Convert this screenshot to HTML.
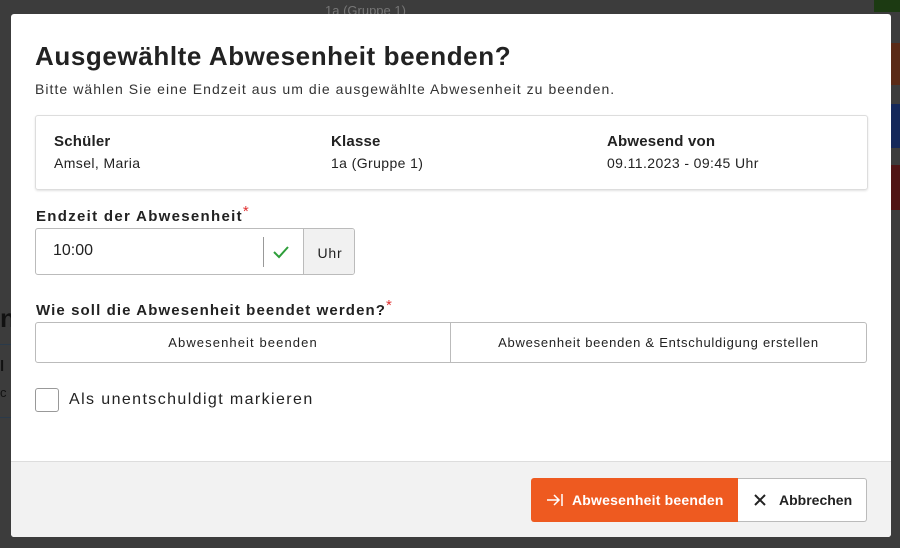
<!DOCTYPE html>
<html><head><meta charset="utf-8"><style>
*{box-sizing:border-box;margin:0;padding:0}
body{width:900px;height:548px;background:#3c3c3c;font-family:"Liberation Sans",sans-serif;position:relative;overflow:hidden;color:#222}
.strip{position:absolute;left:874px;width:26px}
.modal{position:absolute;left:11px;top:14px;width:880px;height:523px;background:#fff;border-radius:3px;overflow:hidden}
h1{position:absolute;left:24px;top:27px;font-size:26px;font-weight:bold;color:#222;letter-spacing:0.6px;white-space:nowrap}
.sub{position:absolute;left:24px;top:67px;font-size:14px;color:#333;letter-spacing:1.05px;white-space:nowrap}
.card{position:absolute;left:24px;top:101px;width:833px;height:75px;border:1px solid #ddd;border-radius:3px;box-shadow:0 1px 2px rgba(0,0,0,.12)}
.col{position:absolute;top:17px;font-size:14px;letter-spacing:0.4px;white-space:nowrap}
.col b{display:block;font-size:15px;margin-bottom:5px;color:#222;letter-spacing:0.2px}
.lbl{position:absolute;left:25px;font-size:15px;font-weight:bold;color:#222;letter-spacing:1.1px;white-space:nowrap}
.lbl span{color:#e03030;font-weight:normal;position:relative;top:-5px;letter-spacing:0}
.inp{position:absolute;left:24px;top:214px;width:320px;height:47px;border:1px solid #bbb;border-radius:3px;overflow:hidden}
.seg{position:absolute;top:308px;height:41px;border:1px solid #bbb;font-size:13px;display:flex;align-items:center;justify-content:center;color:#222;letter-spacing:1.1px;white-space:nowrap}
.foot{position:absolute;left:0;top:447px;width:880px;height:76px;background:#f2f2f2;border-top:1px solid #ddd}
</style></head><body>
<div style="position:absolute;left:325px;top:3px;color:#777;font-size:13px">1a (Gruppe 1)</div>
<div class="strip" style="top:0;height:12px;background:#1c3a12"></div>
<div class="strip" style="top:43px;height:42px;background:#5a2a16"></div>
<div class="strip" style="top:104px;height:44px;background:#14285a"></div>
<div class="strip" style="top:165px;height:45px;background:#501515"></div>
<div style="position:absolute;left:0;top:303px;font-size:26px;font-weight:bold;color:#111">n</div>
<div style="position:absolute;left:0;top:344px;width:11px;border-top:1px solid #2a3a4a"></div>
<div style="position:absolute;left:0;top:358px;font-size:15px;font-weight:bold;color:#111">l</div>
<div style="position:absolute;left:0;top:385px;font-size:13px;color:#111">c</div>
<div style="position:absolute;left:0;top:417px;width:11px;border-top:1px solid #2a3a4a"></div>
<div class="modal">
<h1>Ausgewählte Abwesenheit beenden?</h1>
<div class="sub">Bitte wählen Sie eine Endzeit aus um die ausgewählte Abwesenheit zu beenden.</div>
<div class="card">
<div class="col" style="left:18px"><b>Schüler</b>Amsel, Maria</div>
<div class="col" style="left:295px"><b>Klasse</b>1a (Gruppe 1)</div>
<div class="col" style="left:571px"><b>Abwesend von</b>09.11.2023 - 09:45 Uhr</div>
</div>
<div class="lbl" style="top:194px;letter-spacing:1.3px">Endzeit der Abwesenheit<span>*</span></div>
<div class="inp">
<div style="position:absolute;left:17px;top:13px;font-size:16px">10:00</div>
<div style="position:absolute;left:227px;top:8px;height:30px;border-left:1px solid #999"></div>
<svg style="position:absolute;left:237px;top:16px" width="16" height="14" viewBox="0 0 16 14"><path d="M1 7l5 5 9-10" fill="none" stroke="#2e9e3a" stroke-width="2"/></svg>
<div style="position:absolute;left:267px;top:0;width:53px;height:47px;background:#f1f1f1;border-left:1px solid #bbb;font-size:14px;display:flex;align-items:center;justify-content:center;letter-spacing:0.8px">Uhr</div>
</div>
<div class="lbl" style="top:288px">Wie soll die Abwesenheit beendet werden?<span>*</span></div>
<div class="seg" style="left:24px;width:416px;border-radius:3px 0 0 3px">Abwesenheit beenden</div>
<div class="seg" style="left:439px;width:417px;border-radius:0 3px 3px 0;letter-spacing:0.75px">Abwesenheit beenden &amp; Entschuldigung erstellen</div>
<div style="position:absolute;left:24px;top:374px;width:24px;height:24px;border:1px solid #999;border-radius:3px"></div>
<div style="position:absolute;left:58px;top:377px;font-size:16px;color:#222;letter-spacing:1.4px;white-space:nowrap">Als unentschuldigt markieren</div>
<div class="foot">
<div style="position:absolute;left:520px;top:16px;width:207px;height:44px;background:#ee5a20;border-radius:3px 0 0 3px;color:#fff;font-weight:bold;font-size:14px;display:flex;align-items:center;padding-left:15px;letter-spacing:0.2px">
<svg width="18" height="14" viewBox="0 0 18 14" style="margin-right:8px"><path d="M1 7h11M8 2l5 5-5 5M16 1v12" fill="none" stroke="#fff" stroke-width="1.5"/></svg>Abwesenheit beenden</div>
<div style="position:absolute;left:727px;top:16px;width:129px;height:44px;background:#fff;border:1px solid #bbb;border-left:none;border-radius:0 3px 3px 0;font-size:14px;font-weight:bold;color:#222;display:flex;align-items:center;padding-left:16px">
<svg width="12" height="12" viewBox="0 0 12 12" style="margin-right:13px"><path d="M1 1l10 10M11 1L1 11" stroke="#222" stroke-width="2"/></svg>Abbrechen</div>
</div>
</div>
</body></html>
